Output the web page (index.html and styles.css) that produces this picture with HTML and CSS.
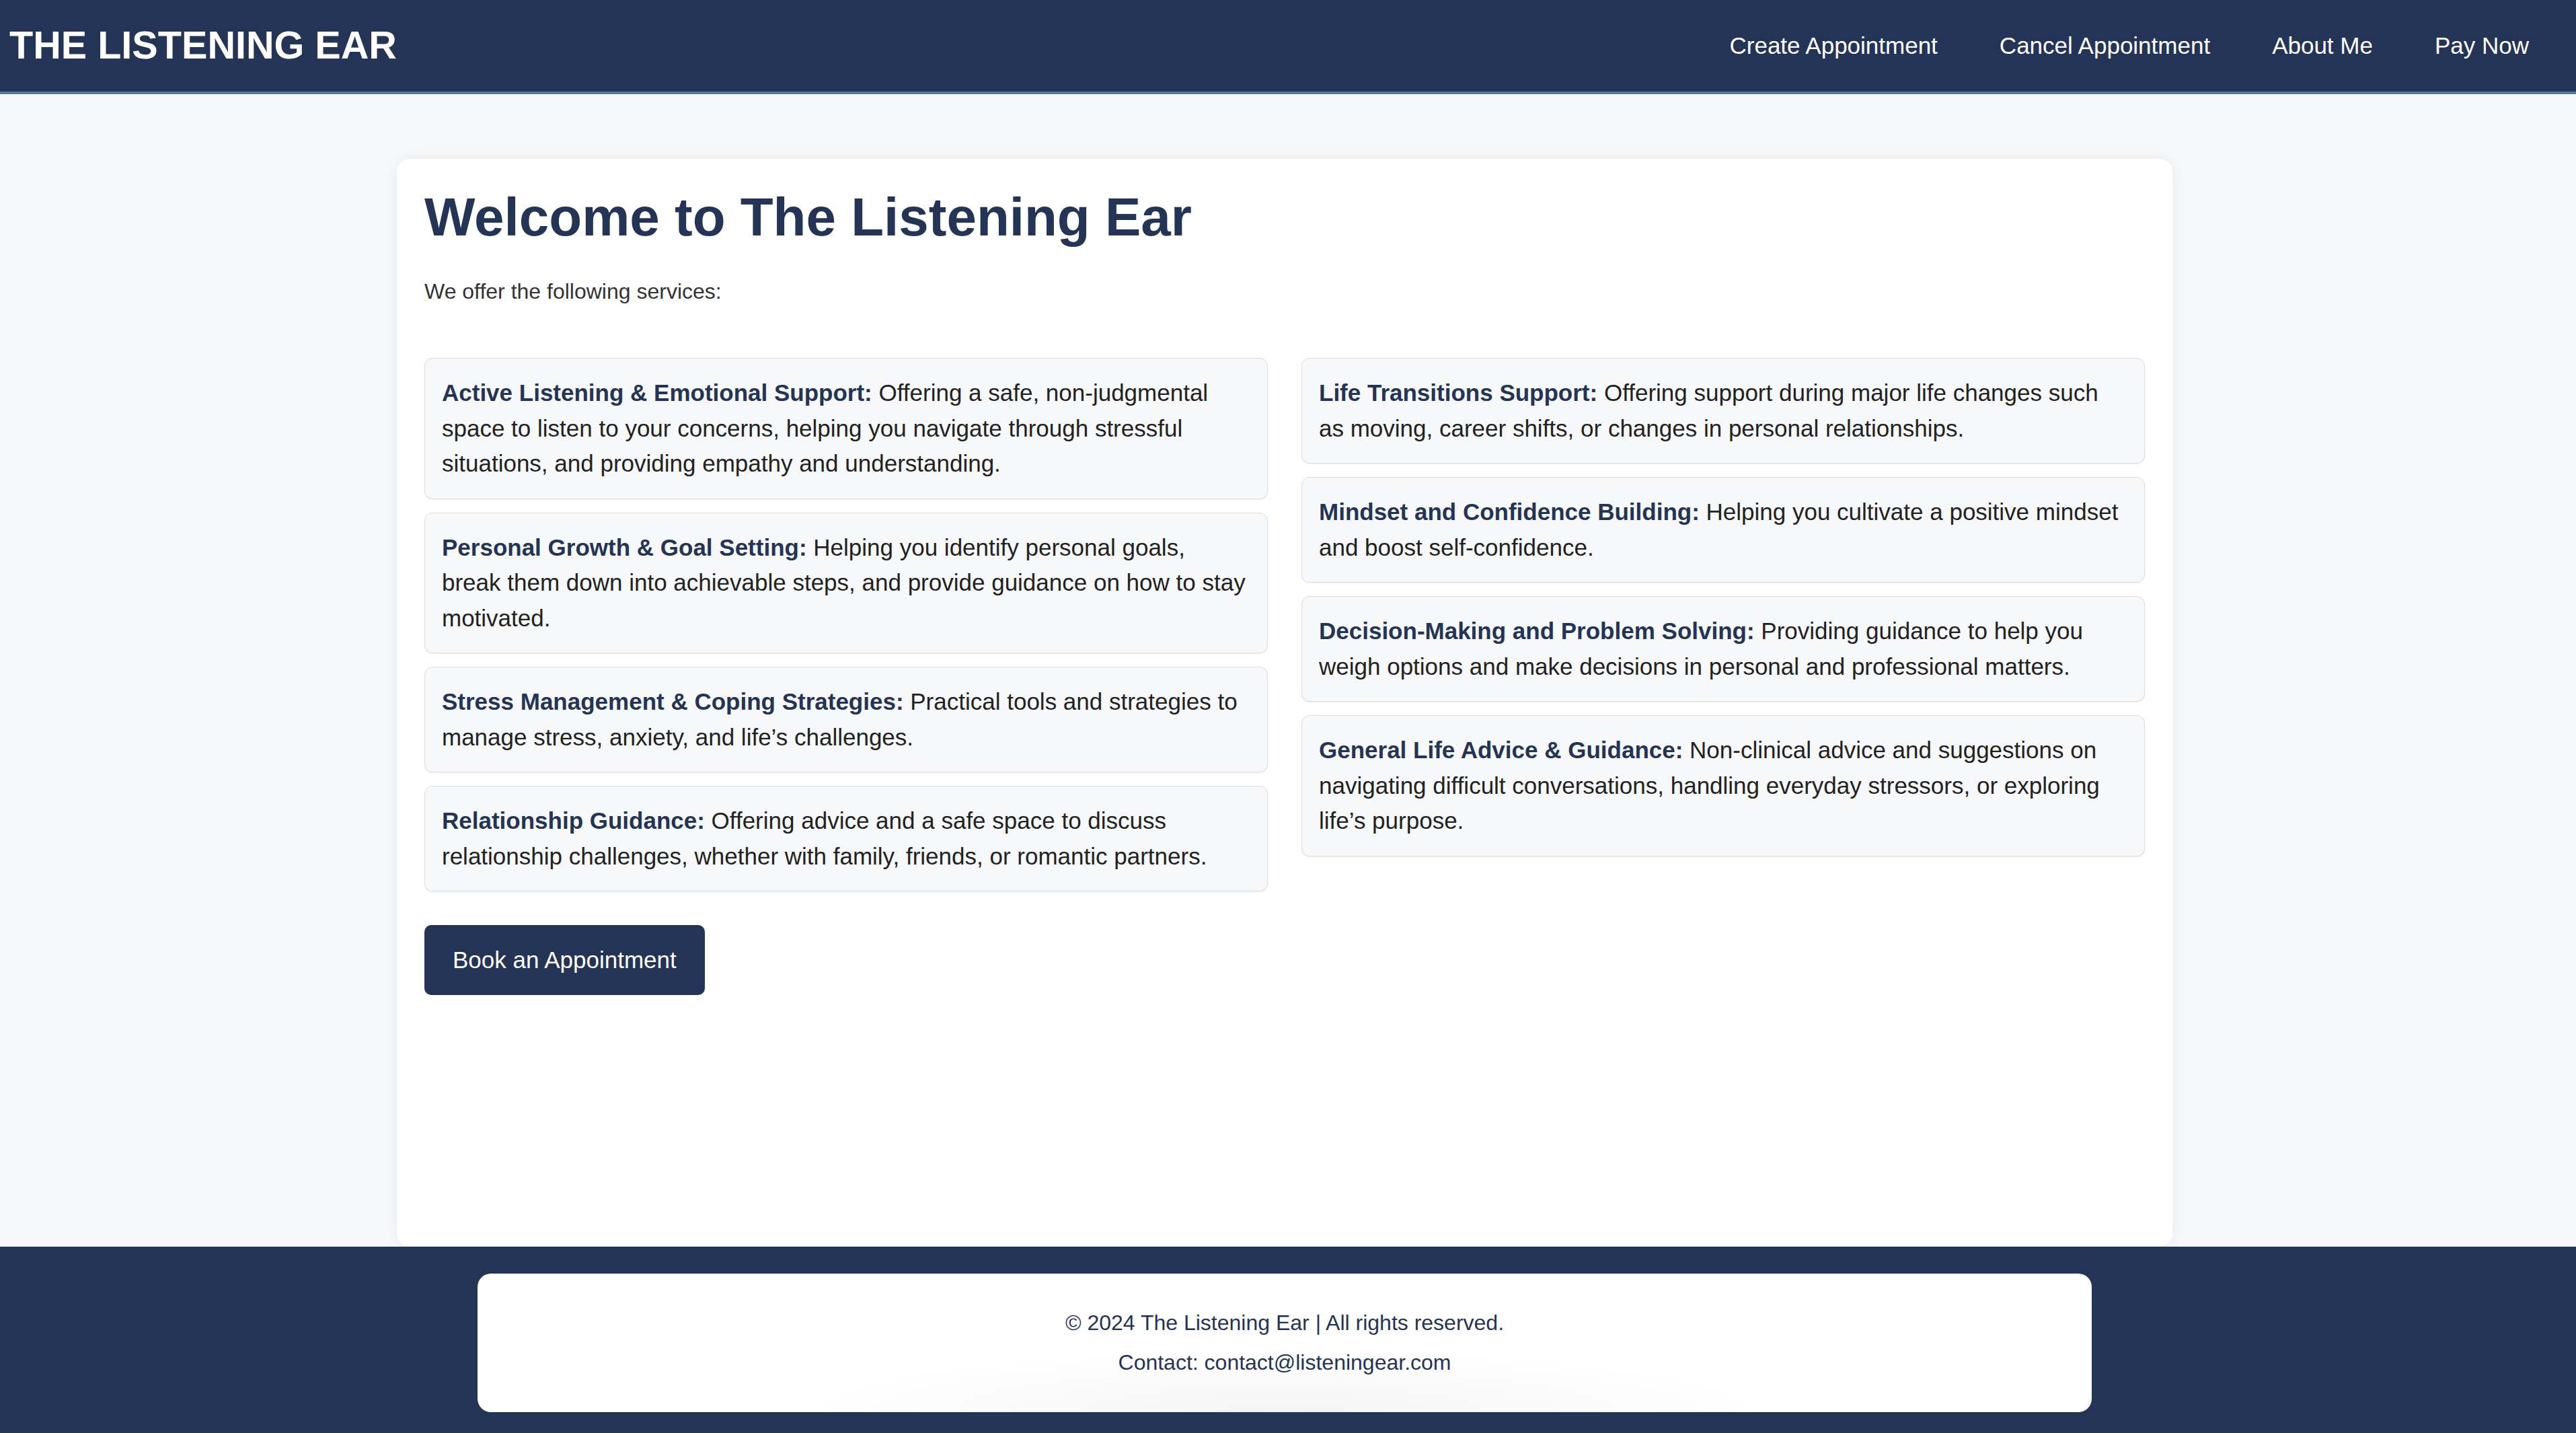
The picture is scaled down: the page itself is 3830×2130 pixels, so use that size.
FILE: index.html
```html
<!DOCTYPE html>
<html lang="en">
<head>
<meta charset="utf-8">
<title>The Listening Ear</title>
<link rel="stylesheet" href="styles.css">
</head>
<body>
<header class="site-header">
  <h1 class="brand">THE LISTENING EAR</h1>
  <nav class="nav">
    <a href="#" class="nav-link">Create Appointment</a>
    <a href="#" class="nav-link">Cancel Appointment</a>
    <a href="#" class="nav-link">About Me</a>
    <a href="#" class="nav-link">Pay Now</a>
  </nav>
</header>
<main class="main">
  <section class="card">
    <h2 class="title">Welcome to The Listening Ear</h2>
    <p class="intro">We offer the following services:</p>
    <div class="services">
      <div class="col">
        <div class="item"><strong>Active Listening &amp; Emotional Support:</strong> Offering a safe, non-judgmental space to listen to your concerns, helping you navigate through stressful situations, and providing empathy and understanding.</div>
        <div class="item"><strong>Personal Growth &amp; Goal Setting:</strong> Helping you identify personal goals, break them down into achievable steps, and provide guidance on how to stay motivated.</div>
        <div class="item"><strong>Stress Management &amp; Coping Strategies:</strong> Practical tools and strategies to manage stress, anxiety, and life’s challenges.</div>
        <div class="item"><strong>Relationship Guidance:</strong> Offering advice and a safe space to discuss relationship challenges, whether with family, friends, or romantic partners.</div>
      </div>
      <div class="col">
        <div class="item"><strong>Life Transitions Support:</strong> Offering support during major life changes such as moving, career shifts, or changes in personal relationships.</div>
        <div class="item"><strong>Mindset and Confidence Building:</strong> Helping you cultivate a positive mindset and boost self-confidence.</div>
        <div class="item"><strong>Decision-Making and Problem Solving:</strong> Providing guidance to help you weigh options and make decisions in personal and professional matters.</div>
        <div class="item"><strong>General Life Advice &amp; Guidance:</strong> Non-clinical advice and suggestions on navigating difficult conversations, handling everyday stressors, or exploring life’s purpose.</div>
      </div>
    </div>
    <a href="#" class="btn">Book an Appointment</a>
  </section>
</main>
<footer class="site-footer">
  <div class="footer-box">
    <p class="footer-line">© 2024 The Listening Ear | All rights reserved.</p>
    <p class="footer-line">Contact: contact@listeningear.com</p>
  </div>
</footer>
</body>
</html>
```

FILE: styles.css
```css
html, body {
  margin: 0;
  padding: 0;
}
body {
  background: #f7f8fa;
  font-family: "Liberation Sans", Arial, Helvetica, sans-serif;
  color: #222;
}
.site-header {
  display: flex;
  align-items: center;
  justify-content: space-between;
  height: 136px;
  padding: 0 70px 0 14px;
  background: #243456;
  border-bottom: 4px solid #507a9d;
}
.brand {
  margin: 0;
  font-size: 57.6px;
  font-weight: 700;
  color: #ffffff;
  line-height: 1;
}
.nav {
  display: flex;
  gap: 92px;
}
.nav-link {
  color: #ffffff;
  text-decoration: none;
  font-size: 35px;
}
.main {
  padding: 96px 10px 0 0;
}
.card {
  box-sizing: border-box;
  width: 2640px;
  min-height: 1617px;
  margin: 0 auto;
  padding: 41px;
  background: #ffffff;
  border-radius: 20px;
  box-shadow: 0 0 24px rgba(0, 0, 0, 0.06);
}
.title {
  margin: 0 0 46px;
  font-size: 80px;
  font-weight: 700;
  color: #243456;
}
.intro {
  margin: 0 0 80px;
  font-size: 32px;
  color: #333;
}
.services {
  display: grid;
  grid-template-columns: 1fr 1fr;
  column-gap: 50px;
  align-items: start;
}
.col {
  display: flex;
  flex-direction: column;
  gap: 20px;
}
.item {
  padding: 25px;
  border: 1px solid #dcdee2;
  border-radius: 12px;
  background: #f7f8fa;
  box-shadow: 0 1px 2px rgba(0, 0, 0, 0.07);
  font-size: 35px;
  line-height: 52.5px;
  color: #222;
}
.item strong {
  color: #243456;
}
.btn {
  display: inline-block;
  margin-top: 50px;
  padding: 32px 42px;
  line-height: 40px;
  font-size: 35px;
  color: #ffffff;
  background: #243456;
  border-radius: 10px;
  text-decoration: none;
}
.site-footer {
  background: #243456;
  padding: 40px 10px 40px 0;
}
.footer-box {
  width: 2400px;
  margin: 0 auto;
  padding: 44px 0;
  background: radial-gradient(ellipse 720px 90px at 50% 100%, rgba(0, 0, 0, 0.045), rgba(0, 0, 0, 0) 100%), #ffffff;
  border-radius: 20px;
  text-align: center;
}
.footer-line {
  margin: 0;
  font-size: 32px;
  line-height: 59px;
  color: #243456;
}
```
